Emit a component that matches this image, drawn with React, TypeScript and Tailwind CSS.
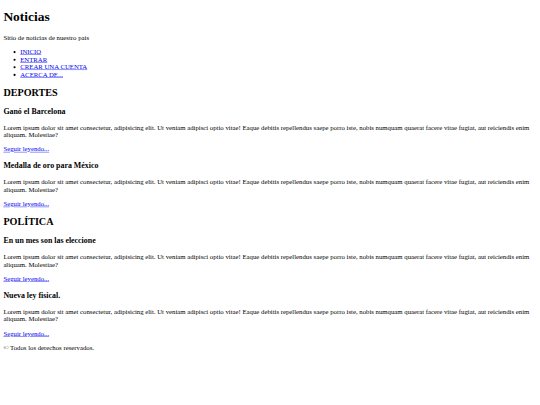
const LOREM =
  "Lorem ipsum dolor sit amet consectetur, adipisicing elit. Ut veniam adipisci optio vitae! Eaque debitis repellendus saepe porro iste, nobis numquam quaerat facere vitae fugiat, aut reiciendis enim aliquam. Molestiae?";

const sections = [
  {
    title: "DEPORTES",
    posts: ["Ganó el Barcelona", "Medalla de oro para México"],
  },
  {
    title: "POLÍTICA",
    posts: ["En un mes son las eleccione", "Nueva ley fisical."],
  },
];

const nav = ["INICIO", "ENTRAR", "CREAR UNA CUENTA", "ACERCA DE..."];

function Link({ children }: { children: React.ReactNode }) {
  return (
    <a href="#" className="text-[#0000ee] underline">
      {children}
    </a>
  );
}

// The page is laid out at 1280px wide with browser-default type, then shown shrunk to 540px.
export default function App() {
  return (
    <div className="w-[540px] h-[405px] overflow-hidden bg-white">
      <div className="w-[1280px] origin-top-left scale-[0.421875] flow-root px-[8px] pb-[8px] text-black font-['Liberation_Serif',serif] text-[16px] leading-[normal]">
        <header>
          <h1 className="text-[32px] font-bold my-[21.44px]">Noticias</h1>
          <p className="my-[16px]">Sitio de noticias de nuestro país</p>
          <nav>
            <ul className="list-disc pl-[40px] my-[16px]">
              {nav.map((n) => (
                <li key={n}>
                  <Link>{n}</Link>
                </li>
              ))}
            </ul>
          </nav>
        </header>

        <main>
          {sections.map((s) => (
            <section key={s.title}>
              <h2 className="text-[24px] font-bold my-[19.92px]">{s.title}</h2>
              {s.posts.map((p) => (
                <article key={p}>
                  <h3 className="text-[18.72px] font-bold my-[18.72px]">{p}</h3>
                  <p className="my-[16px]">{LOREM}</p>
                  <Link>Seguir leyendo...</Link>
                </article>
              ))}
            </section>
          ))}
        </main>

        <footer>
          <p className="my-[16px]">© Todos los derechos reservados.</p>
        </footer>
      </div>
    </div>
  );
}
